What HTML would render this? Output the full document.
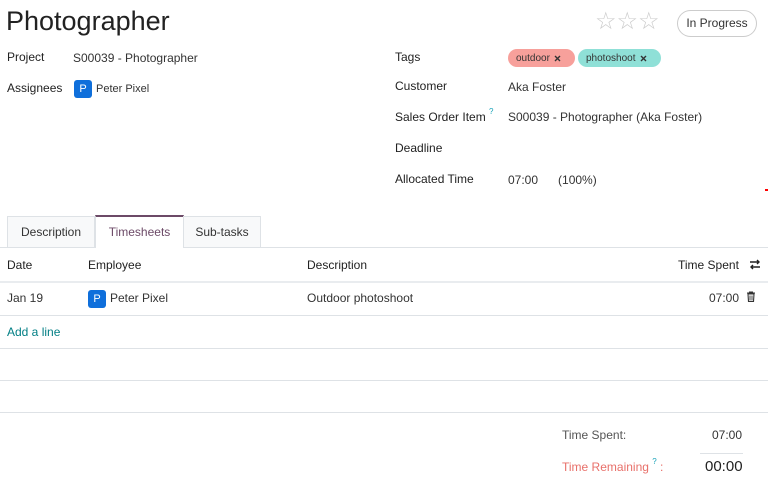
<!DOCTYPE html>
<html><head><style>
*{margin:0;padding:0;box-sizing:border-box}
body{width:768px;height:482px;background:#fff;font-family:"Liberation Sans",sans-serif;color:#222;font-size:12px;position:relative;overflow:hidden}
.a{position:absolute;white-space:nowrap;line-height:14px}
.lbl{font-size:12px;color:#222}
.v{font-size:12px;color:#333}
.av{display:inline-block;width:18px;height:18px;background:#0f6fdb;color:#fff;border-radius:3px;text-align:center;line-height:18px;font-size:11px;vertical-align:middle;margin-right:4px}
.hl{position:absolute;left:0;width:768px;height:1px;background:#dee2e6}
.tag{position:absolute;height:18px;border-radius:9px;font-size:10px;padding:0 8px;color:#333;display:flex;align-items:center;gap:4px;white-space:nowrap}
.tag svg{display:block}
sup{font-size:8px;line-height:0;position:relative;top:-2px;color:#17a2b8}
</style></head><body>
<div class="a" style="left:6px;top:6px;font-size:27px;line-height:30px;color:#222">Photographer</div>
<div class="a" style="left:595px;top:9px;font-size:24px;line-height:26px;color:#ccc">☆☆☆</div>
<div class="a" style="left:677px;top:10px;width:80px;height:27px;border:1px solid #ccc;border-radius:14px;font-size:12px;line-height:25px;text-align:center;color:#333">In Progress</div>

<div class="a lbl" style="left:7px;top:50px">Project</div>
<div class="a v" style="left:73px;top:51px">S00039 - Photographer</div>
<div class="a lbl" style="left:7px;top:81px">Assignees</div>
<div class="a v" style="left:74px;top:80px;font-size:11px;line-height:18px"><span class="av">P</span>Peter Pixel</div>

<div class="a lbl" style="left:395px;top:50px">Tags</div>
<div class="tag" style="left:508px;top:49px;width:67px;background:#f7a09b">outdoor <svg width="7" height="7" viewBox="0 0 7 7"><path d="M1 1l5 5M6 1L1 6" stroke="#333" stroke-width="1.4"/></svg></div>
<div class="tag" style="left:578px;top:49px;width:83px;background:#8fe0d7">photoshoot <svg width="7" height="7" viewBox="0 0 7 7"><path d="M1 1l5 5M6 1L1 6" stroke="#333" stroke-width="1.4"/></svg></div>
<div class="a lbl" style="left:395px;top:79px">Customer</div>
<div class="a v" style="left:508px;top:80px">Aka Foster</div>
<div class="a lbl" style="left:395px;top:110px">Sales Order Item <sup>?</sup></div>
<div class="a v" style="left:508px;top:110px">S00039 - Photographer (Aka Foster)</div>
<div class="a lbl" style="left:395px;top:141px">Deadline</div>
<div class="a lbl" style="left:395px;top:172px">Allocated Time</div>
<div class="a v" style="left:508px;top:173px">07:00 &nbsp;&nbsp;&nbsp;&nbsp;&nbsp;(100%)</div>
<div class="a" style="left:765px;top:189px;width:3px;height:2px;background:red"></div>

<div class="a" style="left:7px;top:216px;width:88px;height:32px;background:#f8f9fa;border:1px solid #dee2e6;border-bottom:none;text-align:center;line-height:30px;color:#333">Description</div>
<div class="a" style="left:95px;top:215px;width:89px;height:33px;background:#fff;border-top:2px solid #6c4a67;border-left:1px solid #dee2e6;border-right:1px solid #dee2e6;text-align:center;line-height:30px;color:#6c4a67">Timesheets</div>
<div class="a" style="left:183px;top:216px;width:78px;height:32px;background:#f8f9fa;border:1px solid #dee2e6;border-bottom:none;text-align:center;line-height:30px;color:#333">Sub-tasks</div>
<div class="hl" style="top:247px"></div>
<div class="a" style="left:96px;top:247px;width:87px;height:1px;background:#fff"></div>

<div class="a lbl" style="left:7px;top:258px">Date</div>
<div class="a lbl" style="left:88px;top:258px">Employee</div>
<div class="a lbl" style="left:307px;top:258px">Description</div>
<div class="a lbl" style="left:678px;top:258px">Time Spent</div>
<svg class="a" style="left:749px;top:259px" width="12" height="11" viewBox="0 0 12 11"><path d="M1 3h9M8 1l2 2-2 2M11 8H2M4 6L2 8l2 2" stroke="#222" stroke-width="1.4" fill="none"/></svg>
<div class="hl" style="top:281px;height:2px;background:#e9ecef"></div>
<div class="a v" style="left:7px;top:291px">Jan 19</div>
<div class="a v" style="left:88px;top:289px;line-height:18px"><span class="av">P</span>Peter Pixel</div>
<div class="a v" style="left:307px;top:291px">Outdoor photoshoot</div>
<div class="a v" style="left:709px;top:291px">07:00</div>
<svg class="a" style="left:746px;top:291px" width="10" height="11" viewBox="0 0 10 11"><path d="M1 2h8M3.5 2V1h3v1M2 3h6l-.5 7.5h-5z" stroke="#333" stroke-width="1.1" fill="none"/><path d="M4 4.5v5M6 4.5v5" stroke="#333" stroke-width=".9"/></svg>
<div class="hl" style="top:315px"></div>
<div class="a" style="left:7px;top:325px;color:#017e84">Add a line</div>
<div class="hl" style="top:348px"></div>
<div class="hl" style="top:380px"></div>
<div class="hl" style="top:412px"></div>

<div class="a" style="left:562px;top:428px;color:#555">Time Spent:</div>
<div class="a" style="left:712px;top:428px;color:#333">07:00</div>
<div class="a" style="left:700px;top:453px;width:43px;height:1px;background:#dee2e6"></div>
<div class="a" style="left:562px;top:460px;color:#e8706a">Time Remaining <sup>?</sup> :</div>
<div class="a" style="left:705px;top:459px;font-size:15px;line-height:16px;color:#222">00:00</div>
</body></html>
